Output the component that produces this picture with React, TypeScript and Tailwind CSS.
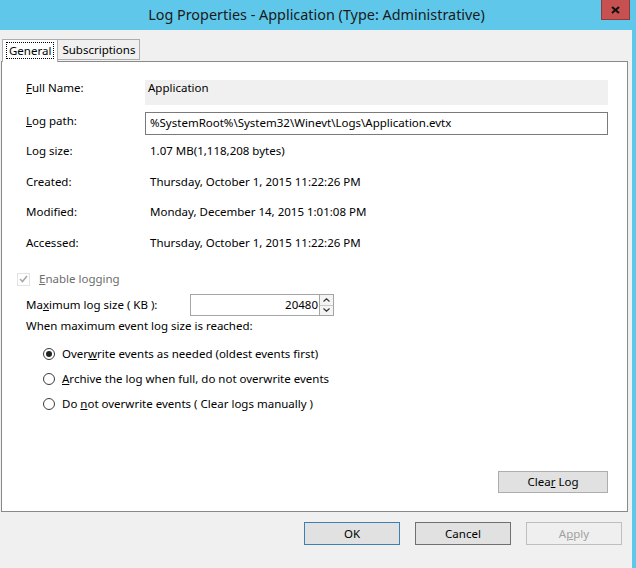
import React from 'react';

const font = { fontFamily: '"Noto Sans", "Open Sans", sans-serif' };

const InfoRow = ({ label, value, height }: { label: React.ReactNode; value: string; height: string }) => (
  <div className={`flex items-start ${height}`}>
    <div className="w-[124px] leading-[16px]">{label}</div>
    <div className="leading-[16px]">{value}</div>
  </div>
);

const Radio = ({ checked, children }: { checked?: boolean; children: React.ReactNode }) => (
  <div className="flex items-center h-[25px]">
    <div className="w-[12px] h-[12px] rounded-full border border-[#3c3c3c] bg-white flex items-center justify-center ml-[17px] mr-[7px]">
      {checked && <div className="w-[6px] h-[6px] rounded-full bg-[#222]" />}
    </div>
    <span className="leading-[16px]">{children}</span>
  </div>
);

const DialogButton = ({
  children,
  variant = 'normal',
}: {
  children: React.ReactNode;
  variant?: 'default' | 'normal' | 'disabled';
}) => {
  const styles =
    variant === 'default'
      ? 'border-[#3c7fb1] bg-[#e1e1e1] text-black'
      : variant === 'disabled'
        ? 'border-[#bfbfbf] bg-[#efefef] text-[#a0a0a0]'
        : 'border-[#707070] bg-[#e1e1e1] text-black';
  return (
    <div className={`w-[96px] h-[23px] border flex items-center justify-center leading-[16px] ${styles}`}>
      <span>{children}</span>
    </div>
  );
};

export default function App() {
  return (
    <div className="w-[636px] h-[568px] bg-[#5fc8ea] flex flex-col pr-[4px] text-[11.5px] text-black" style={font}>
      {/* Title bar */}
      <div className="relative h-[30px] flex items-center justify-center">
        <span className="text-[14.4px] text-[#1a1a1a] leading-[20px] ml-[1px]">
          Log Properties - Application (Type: Administrative)
        </span>
        <div className="absolute top-0 right-[2px] w-[29px] h-[20px] bg-[#c75050] border border-[#8c3b3b] border-t-0 flex items-center justify-center">
          <svg width="9" height="8" viewBox="0 0 9 8">
            <path d="M1 1 L8 7 M8 1 L1 7" stroke="#111" strokeWidth="2" />
          </svg>
        </div>
      </div>

      {/* Body */}
      <div className="flex-1 bg-[#f0f0f0] flex flex-col pt-[9px] pl-[1px] pr-[4px]">
        {/* Tabs */}
        <div className="flex items-end h-[22px] relative z-10">
          <div className="ml-[1px] h-[23px] -mb-[1px] bg-white border border-b-0 border-[#adadad] px-[3px] pt-[2px]">
            <div className="border border-dotted border-black px-[2px] leading-[15px]">General</div>
          </div>
          <div className="h-[21px] bg-[#f0f0f0] border border-l-0 border-[#adadad] px-[4px] flex items-center leading-[16px] mb-[1px]">
            Subscriptions
          </div>
        </div>

        {/* Tab panel */}
        <div className="h-[451px] bg-white border border-[#898989] flex flex-col pl-[24px] pr-[19px] pt-[18px]">
          <div className="flex items-start h-[32px]">
            <div className="w-[119px] leading-[16px]">
              <u>F</u>ull Name:
            </div>
            <div className="flex-1 h-[25px] bg-[#f0f0f0] pl-[3px] leading-[16px]">Application</div>
          </div>
          <div className="flex items-start h-[31px]">
            <div className="w-[119px] leading-[16px] pt-[1px]">
              <u>L</u>og path:
            </div>
            <div className="flex-1 h-[23px] border border-[#7a7a7a] pl-[4px] pt-[2px] leading-[16px]">
              %SystemRoot%\System32\Winevt\Logs\Application.evtx
            </div>
          </div>
          <InfoRow label="Log size:" value="1.07 MB(1,118,208 bytes)" height="h-[31px]" />
          <InfoRow label="Created:" value="Thursday, October 1, 2015 11:22:26 PM" height="h-[30px]" />
          <InfoRow label="Modified:" value="Monday, December 14, 2015 1:01:08 PM" height="h-[31px]" />
          <InfoRow label="Accessed:" value="Thursday, October 1, 2015 11:22:26 PM" height="h-[36px]" />

          {/* Enable logging */}
          <div className="flex items-center h-[16px] -ml-[9px]">
            <div className="w-[13px] h-[13px] border border-[#e2e2e2] flex items-center justify-center mr-[9px]">
              <svg width="9" height="8" viewBox="0 0 9 8">
                <path d="M1 4 L3.5 6.5 L8 1" stroke="#a8a8a8" strokeWidth="1.6" fill="none" />
              </svg>
            </div>
            <span className="text-[#6d6d6d] leading-[16px]">
              <u>E</u>nable logging
            </span>
          </div>

          <div className="flex items-center mt-[7px] h-[22px]">
            <div className="w-[164px] leading-[16px]">
              Ma<u>x</u>imum log size ( KB ):
            </div>
            <div className="w-[129px] h-[22px] border border-[#a5a5a5] border-r-0 flex items-center justify-end pr-[1px] leading-[16px]">
              20480
            </div>
            <div className="w-[15px] h-[22px] flex flex-col border border-[#a5a5a5] bg-white">
              <div className="flex-1 border-b border-[#c8c8c8] flex items-center justify-center bg-[#f4f4f4]">
                <svg width="7" height="4" viewBox="0 0 7 4">
                  <path d="M0.5 3.5 L3.5 0.8 L6.5 3.5" stroke="#333" strokeWidth="1.2" fill="none" />
                </svg>
              </div>
              <div className="flex-1 flex items-center justify-center bg-[#f4f4f4]">
                <svg width="7" height="4" viewBox="0 0 7 4">
                  <path d="M0.5 0.5 L3.5 3.2 L6.5 0.5" stroke="#333" strokeWidth="1.2" fill="none" />
                </svg>
              </div>
            </div>
          </div>

          <div className="leading-[16px] mt-[2px]">When maximum event log size is reached:</div>

          <div className="flex flex-col mt-[7px]">
            <Radio checked>
              Over<u>w</u>rite events as needed (oldest events first)
            </Radio>
            <Radio>
              <u>A</u>rchive the log when full, do not overwrite events
            </Radio>
            <Radio>
              Do <u>n</u>ot overwrite events ( Clear logs manually )
            </Radio>
          </div>

          <div className="flex-1 flex items-end justify-end pb-[18px]">
            <div className="w-[110px] h-[22px] border border-[#adadad] bg-[#e1e1e1] flex items-center justify-center leading-[16px]">
              <span>
                Clea<u>r</u> Log
              </span>
            </div>
          </div>
        </div>

        {/* Dialog buttons */}
        <div className="flex justify-end gap-[15px] pt-[10px] pr-[6px]">
          <DialogButton variant="default">OK</DialogButton>
          <DialogButton>Cancel</DialogButton>
          <DialogButton variant="disabled">
            A<u>p</u>ply
          </DialogButton>
        </div>
      </div>
    </div>
  );
}
